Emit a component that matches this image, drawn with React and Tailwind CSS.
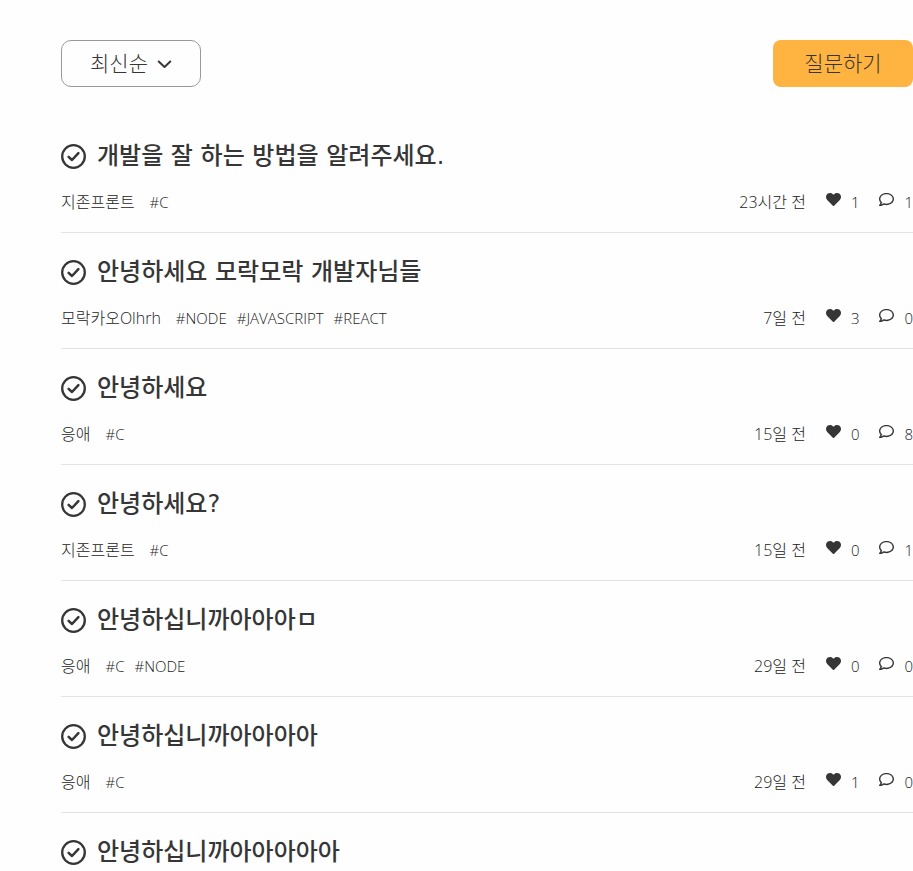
import React from 'react';
import { FaHeart, FaRegComment } from 'react-icons/fa';

const questions = [
  { id: 1, title: '개발을 잘 하는 방법을 알려주세요.', author: '지존프론트', tags: ['C'], time: '23시간 전', likes: 1, comments: 1 },
  { id: 2, title: '안녕하세요 모락모락 개발자님들', author: '모락카오Olhrh', tags: ['NODE', 'JAVASCRIPT', 'REACT'], time: '7일 전', likes: 3, comments: 0 },
  { id: 3, title: '안녕하세요', author: '응애', tags: ['C'], time: '15일 전', likes: 0, comments: 8 },
  { id: 4, title: '안녕하세요?', author: '지존프론트', tags: ['C'], time: '15일 전', likes: 0, comments: 1 },
  { id: 5, title: '안녕하십니까아아아ㅁ', author: '응애', tags: ['C', 'NODE'], time: '29일 전', likes: 0, comments: 0 },
  { id: 6, title: '안녕하십니까아아아아', author: '응애', tags: ['C'], time: '29일 전', likes: 1, comments: 0 },
  { id: 7, title: '안녕하십니까아아아아아' },
];

const CheckIcon = () => (
  <svg className="w-[25px] h-[25px] shrink-0" viewBox="0 0 25 25" fill="none" stroke="currentColor" aria-hidden="true">
    <circle cx="12.5" cy="12.5" r="11.3" strokeWidth="2.3" />
    <path d="M7.6 12.8L11 16L17.4 9.2" strokeWidth="2.5" strokeLinecap="round" strokeLinejoin="round" />
  </svg>
);

const QuestionMeta = ({ question }) => (
  <div className="mt-[15px] mb-[18px] flex items-center justify-between text-base leading-6 text-[#222222]">
    <div className="flex">
      <span className="mr-[15px]">{question.author}</span>
      <div className="flex gap-2.5 text-[15px]">
        {question.tags.map((tag) => (
          <span key={tag}>#{tag}</span>
        ))}
      </div>
    </div>
    <div className="flex gap-5">
      <span>{question.time}</span>
      <span className="flex gap-2.5 text-[15px]">
        <FaHeart className="mt-0.5 w-[15px] h-[15px] text-[#363636]" aria-hidden="true" />
        {question.likes}
      </span>
      <span className="flex gap-2.5 text-[15px]">
        <FaRegComment className="mt-0.5 w-[15px] h-[15px] text-[#363636]" aria-hidden="true" />
        {question.comments}
      </span>
    </div>
  </div>
);

const QuestionItem = ({ question }) => {
  return (
    <li className="border-b border-[#e3e3e6] pt-[21px] last:border-b-0">
      <a href="#question" className="flex items-center gap-[11px]">
        <CheckIcon />
        <h2 className="font-['DejaVu_Sans','Noto_Sans_CJK_KR',sans-serif] text-2xl leading-[37px] font-medium">
          {question.title}
        </h2>
      </a>
      {question.author && <QuestionMeta question={question} />}
    </li>
  );
};

export default function App() {
  return (
    <main className="bg-[#fefefe] pt-10 pl-[61px] font-['Open_Sans','Noto_Sans_CJK_KR',sans-serif] font-light text-[#363636]">
      <div className="flex items-center justify-between">
        <div className="relative">
          <select
            aria-label="정렬"
            className="h-[47px] w-[140px] appearance-none rounded-[10px] border border-[#999999] bg-transparent pl-7 text-[21px]"
          >
            <option>최신순</option>
          </select>
          <svg
            className="pointer-events-none absolute top-4 right-7 w-4 h-4"
            viewBox="0 0 16 16"
            fill="none"
            stroke="currentColor"
            strokeWidth="2"
            strokeLinecap="round"
            strokeLinejoin="round"
            aria-hidden="true"
          >
            <path d="M1.7 5.5L7.5 11L13.3 5.5" />
          </svg>
        </div>
        <button type="button" className="h-[47px] w-[140px] rounded-lg bg-[#ffb340] text-[21px]">
          질문하기
        </button>
      </div>
      <ul className="mt-[30px]">
        {questions.map((question) => (
          <QuestionItem key={question.id} question={question} />
        ))}
      </ul>
    </main>
  );
}
